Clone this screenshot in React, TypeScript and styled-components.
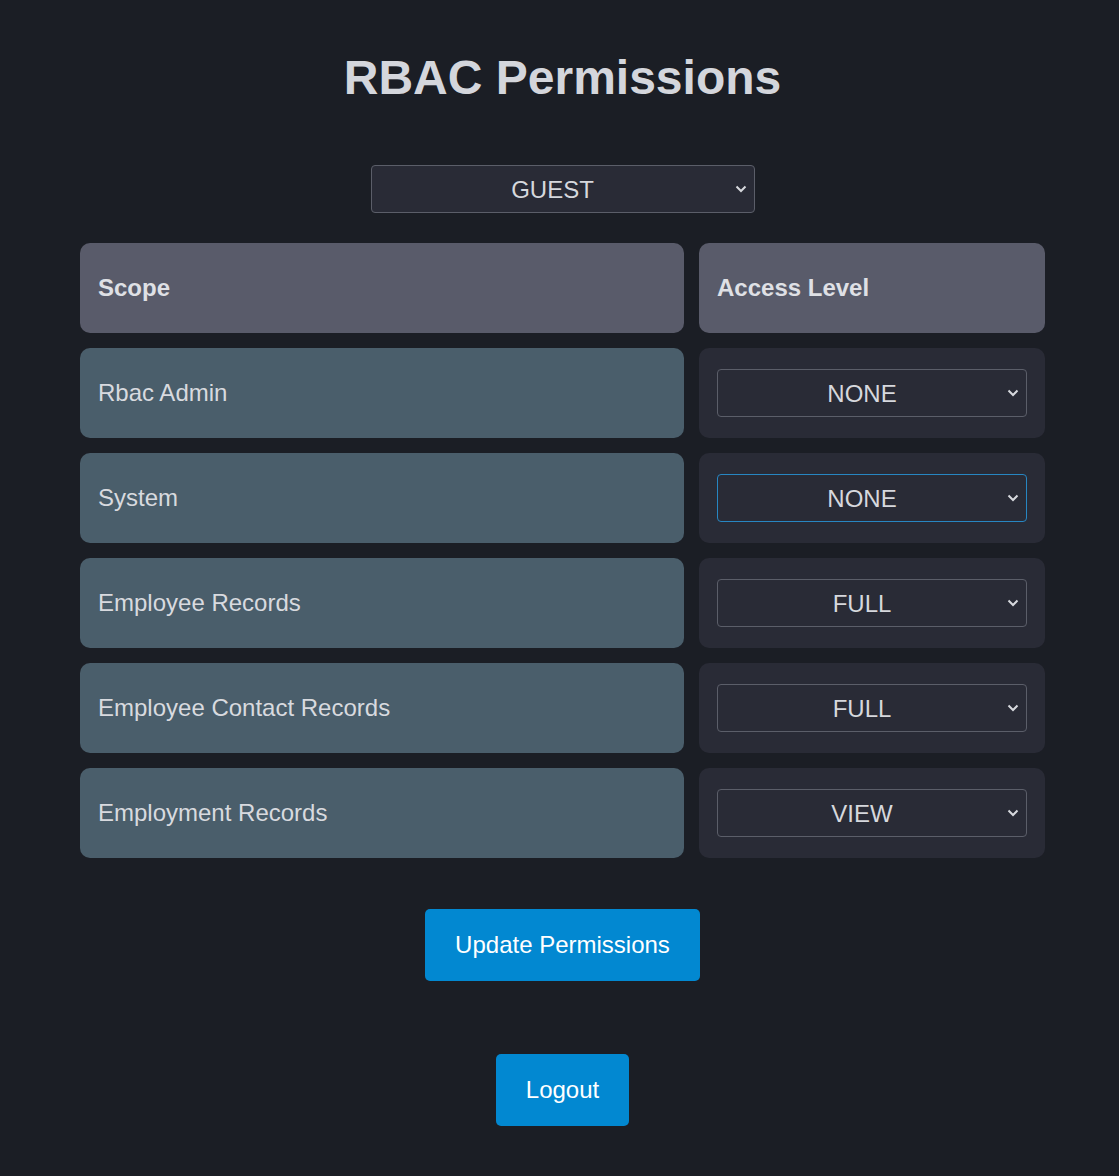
import React from "react";
import styled, { createGlobalStyle } from "styled-components";

const Global = createGlobalStyle`
  html, body {
    margin: 0;
    padding: 0;
    background: #1b1e25;
  }
  body {
    font-family: "Liberation Sans", Arial, sans-serif;
    color: #d6d8dd;
  }
`;

const Page = styled.div`
  min-height: 1176px;
  box-sizing: border-box;
  padding-left: 6px;
  display: flex;
  flex-direction: column;
  align-items: center;
`;

const Title = styled.h1`
  margin: 50px 0 0;
  font-size: 48px;
  line-height: 55px;
  font-weight: 700;
  color: #d4d6dc;
`;

const SelectWrap = styled.div<{ $width: number }>`
  position: relative;
  width: ${(p) => p.$width}px;
  height: 48px;
`;

const Select = styled.select<{ $focused?: boolean }>`
  appearance: none;
  -webkit-appearance: none;
  width: 100%;
  height: 100%;
  box-sizing: border-box;
  background: #292b36;
  color: #d6d8dd;
  border: 1px solid ${(p) => (p.$focused ? "#2786c2" : "#5b5e69")};
  border-radius: 4px;
  font-family: "Liberation Sans", Arial, sans-serif;
  font-size: 24px;
  text-align: center;
  text-align-last: center;
  padding: 0 28px 0 8px;
  outline: none;
`;

const Chevron = styled.svg`
  position: absolute;
  right: 8px;
  top: 50%;
  margin-top: -4px;
  pointer-events: none;
`;

const RoleRow = styled.div`
  margin-top: 60px;
`;

const Grid = styled.div`
  margin-top: 30px;
  display: grid;
  grid-template-columns: 604px 346px;
  grid-auto-rows: 90px;
  gap: 15px;
`;

const Cell = styled.div<{ $variant: "head" | "scope" | "access" }>`
  border-radius: 10px;
  display: flex;
  align-items: center;
  padding: 0 18px;
  font-size: 24px;
  background: ${(p) =>
    p.$variant === "head" ? "#595b6a" : p.$variant === "scope" ? "#4a5e6b" : "#292b36"};
  color: ${(p) => (p.$variant === "head" ? "#dfe0e5" : "#d8dadf")};
  font-weight: ${(p) => (p.$variant === "head" ? 700 : 400)};
`;

const Button = styled.button<{ $top: number }>`
  margin-top: ${(p) => p.$top}px;
  height: 72px;
  padding: 0 30px;
  background: #0288d1;
  color: #ffffff;
  border: none;
  border-radius: 5px;
  font-family: "Liberation Sans", Arial, sans-serif;
  font-size: 24px;
`;

const ChevronIcon = () => (
  <Chevron width="12" height="8" viewBox="0 0 12 8">
    <polyline points="1.5,1.5 6,6 10.5,1.5" fill="none" stroke="#d6d8dd" strokeWidth="2" />
  </Chevron>
);

const LevelSelect = ({ value, width, focused }: { value: string; width: number; focused?: boolean }) => (
  <SelectWrap $width={width}>
    <Select defaultValue={value} $focused={focused}>
      <option>NONE</option>
      <option>VIEW</option>
      <option>FULL</option>
      <option>GUEST</option>
      <option>ADMIN</option>
    </Select>
    <ChevronIcon />
  </SelectWrap>
);

const rows = [
  { scope: "Rbac Admin", level: "NONE" },
  { scope: "System", level: "NONE", focused: true },
  { scope: "Employee Records", level: "FULL" },
  { scope: "Employee Contact Records", level: "FULL" },
  { scope: "Employment Records", level: "VIEW" },
];

export default function App() {
  return (
    <>
      <Global />
      <Page>
        <Title>RBAC Permissions</Title>
        <RoleRow>
          <LevelSelect value="GUEST" width={384} />
        </RoleRow>
        <Grid>
          <Cell $variant="head">Scope</Cell>
          <Cell $variant="head">Access Level</Cell>
          {rows.map((r) => (
            <React.Fragment key={r.scope}>
              <Cell $variant="scope">{r.scope}</Cell>
              <Cell $variant="access">
                <LevelSelect value={r.level} width={310} focused={r.focused} />
              </Cell>
            </React.Fragment>
          ))}
        </Grid>
        <Button $top={51}>Update Permissions</Button>
        <Button $top={73}>Logout</Button>
      </Page>
    </>
  );
}
